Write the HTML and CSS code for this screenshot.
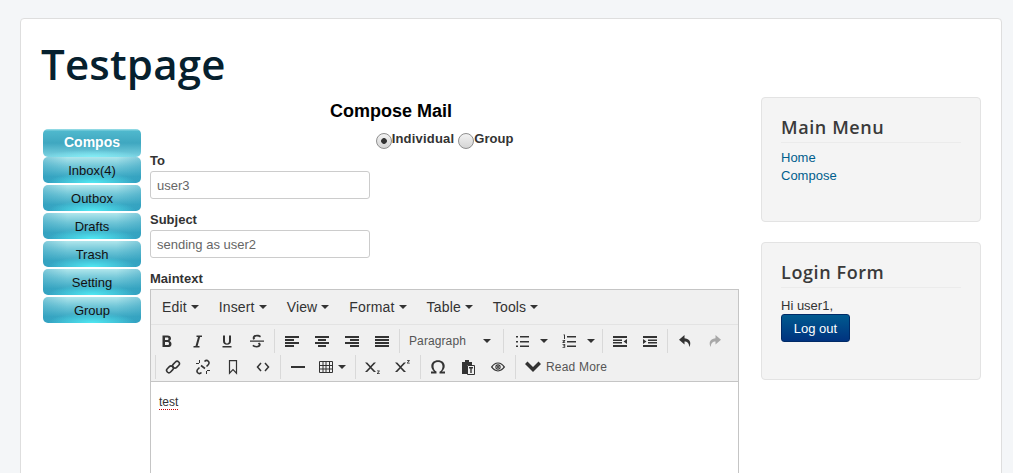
FILE: index.html
```html
<!DOCTYPE html>
<html lang="en">
<head>
    <meta charset="UTF-8">
    <title>Testpage</title>
    <link rel="stylesheet" href="styles.css">
</head>
<body>
    <div class="page">
        <h1 class="site-title">Testpage</h1>
        <div class="columns">
            <div class="main">
                <h3 class="compose-title">Compose Mail</h3>
                <div class="main-row">
                    <ul class="side-nav">
                        <li class="active">Compos</li>
                        <li>Inbox(4)</li>
                        <li>Outbox</li>
                        <li>Drafts</li>
                        <li>Trash</li>
                        <li>Setting</li>
                        <li>Group</li>
                    </ul>
                    <form class="mail-form">
                        <div class="radio-row">
                            <input type="radio" name="kind" id="individual" checked><label for="individual">Individual</label>
                            <input type="radio" name="kind" id="group"><label for="group">Group</label>
                        </div>
                        <label class="field-label" for="to">To</label>
                        <input class="text-input" type="text" id="to" value="user3">
                        <label class="field-label" for="subject">Subject</label>
                        <input class="text-input" type="text" id="subject" value="sending as user2">
                        <label class="field-label" for="maintext">Maintext</label>
                        <div class="editor">
                            <div class="menubar">
                                <span class="menu-item">Edit<i class="caret"></i></span>
                                <span class="menu-item">Insert<i class="caret"></i></span>
                                <span class="menu-item">View<i class="caret"></i></span>
                                <span class="menu-item">Format<i class="caret"></i></span>
                                <span class="menu-item">Table<i class="caret"></i></span>
                                <span class="menu-item">Tools<i class="caret"></i></span>
                            </div>
                            <div class="toolbar">
                                <div class="tool-row">
                                    <div class="tool-group first">
                                        <span class="tool"><svg viewBox="0 0 16 16"><path d="M3.500 2.500h5c2.200 0 3.500 1.100 3.500 3 0 1.200-.7 2-1.600 2.500 1.200.4 2.100 1.500 2.100 2.900 0 2.200-1.600 3.100-3.800 3.100H3.500zm2.500 2v2.500h2.200c.9 0 1.300-.5 1.300-1.300 0-.8-.5-1.200-1.400-1.200zm0 4.500v3h2.500c1 0 1.500-.5 1.500-1.500 0-1-.6-1.500-1.600-1.500z"/></svg></span>
                                        <span class="tool"><svg viewBox="0 0 16 16"><path d="M7.500 2.500H13V4h-1.900L8.600 13h1.900v1.500h-6V13h2L9 4H7.500z"/></svg></span>
                                        <span class="tool"><svg viewBox="0 0 16 16"><path d="M3.500 13h9v1.500h-9zM4 2.500h2V8c0 1.500.7 2.500 2 2.500s2-1 2-2.500V2.500h2V8c0 2.500-1.500 3.800-4 3.800S4 10.500 4 8z"/></svg></span>
                                        <span class="tool"><svg viewBox="0 0 16 16"><path d="M1 7.500h14v1.200H1zM4.300 6.800C3.900 6.300 3.700 5.700 3.700 5c0-2 1.800-3.200 4.300-3.200 1.700 0 3 .5 4 1.300l-.9 1.300c-.9-.6-1.900-1-3.100-1-1.400 0-2.300.6-2.300 1.500 0 .4.200.7.500.9zM10.200 9.400c1 .5 1.500 1.200 1.500 2.100 0 1.800-1.600 3-4.100 3-1.800 0-3.200-.5-4.300-1.400l1-1.300c1 .7 2.100 1.100 3.300 1.100 1.300 0 2.100-.5 2.100-1.300 0-.5-.3-.9-.9-1.200z"/></svg></span>
                                    </div>
                                    <div class="tool-group">
                                        <span class="tool"><svg viewBox="0 0 16 16"><path d="M1 3h14v2H1zM1 6h9v2H1zM1 9h14v2H1zM1 12h9v2H1z"/></svg></span>
                                        <span class="tool"><svg viewBox="0 0 16 16"><path d="M1 3h14v2H1zM4 6h8v2H4zM1 9h14v2H1zM4 12h8v2H4z"/></svg></span>
                                        <span class="tool"><svg viewBox="0 0 16 16"><path d="M1 3h14v2H1zM6 6h9v2H6zM1 9h14v2H1zM6 12h9v2H6z"/></svg></span>
                                        <span class="tool"><svg viewBox="0 0 16 16"><path d="M1 3h14v2H1zM1 6h14v2H1zM1 9h14v2H1zM1 12h14v2H1z"/></svg></span>
                                    </div>
                                    <div class="tool-group">
                                        <span class="format-select">Paragraph<i class="caret"></i></span>
                                    </div>
                                    <div class="tool-group">
                                        <span class="tool split"><svg viewBox="0 0 16 16"><path d="M6 3h9v1.500H6zM6 8h9v1.500H6zM6 12.500h9V14H6zM2 3h2v1.500H2zM2 8h2v1.500H2zM2 12.500h2V14H2z"/></svg><i class="caret"></i></span>
                                        <span class="tool split"><svg viewBox="0 0 16 16"><path d="M6 3h9v1.500H6zM6 8h9v1.500H6zM6 12.500h9V14H6zM2.500 1.500H4V6H3V2.300h-.5zM1.500 7h2.700v1L2.800 9.300h1.400V10H1.500V9L3 7.700H1.500zM1.500 11h2.700v3.700H1.500V14h1.800v-.8H2v-.6h1.300v-.9H1.500z"/></svg><i class="caret"></i></span>
                                    </div>
                                    <div class="tool-group">
                                        <span class="tool"><svg viewBox="0 0 16 16"><path d="M1 3h14v2H1zM1 6.500h9V8H1zM1 9h9v1.500H1zM1 12h14v2H1zM15 6v5l-3.500-2.500z"/></svg></span>
                                        <span class="tool"><svg viewBox="0 0 16 16"><path d="M1 3h14v2H1zM6 6.500h9V8H6zM6 9h9v1.500H6zM1 12h14v2H1zM1 6v5l3.500-2.500z"/></svg></span>
                                    </div>
                                    <div class="tool-group">
                                        <span class="tool"><svg viewBox="0 0 16 16"><path d="M7.500 2L2 6.800l5.500 4.700V8.500c2.800 0 4.500 1.300 4.700 5.500 2-3 1.800-8.200-4.700-8.700z"/></svg></span>
                                        <span class="tool disabled"><svg viewBox="0 0 16 16"><path d="M8.500 2L14 6.800l-5.500 4.700V8.500c-2.800 0-4.500 1.300-4.700 5.500-2-3-1.800-8.200 4.700-8.700z"/></svg></span>
                                    </div>
                                </div>
                                <div class="tool-row second">
                                    <div class="tool-group">
                                        <span class="tool"><svg viewBox="0 0 16 16"><g fill="none" stroke="#333" stroke-width="1.600"><rect x="1.200" y="8" width="7.500" height="4.600" rx="2.300" transform="rotate(-45 5 10.300)"/><rect x="7.300" y="3.400" width="7.500" height="4.600" rx="2.300" transform="rotate(-45 11 5.700)"/></g></svg></span>
                                        <span class="tool"><svg viewBox="0 0 16 16"><g fill="none" stroke="#333" stroke-width="1.600"><path d="M6.500 13.500c-1.300 1.300-2.700 1.400-3.800.3s-1-2.600.3-3.800l1.500-1.500M9.500 2.500c1.300-1.300 2.700-1.400 3.800-.3s1 2.600-.3 3.800l-1.500 1.500M6 6.500l4 3"/></g><path d="M1 4h3v1H1zM4 1h1v3H4zM12 11h3v1h-3zM11 12h1v3h-1z"/></svg></span>
                                        <span class="tool"><svg viewBox="0 0 16 16"><path fill="none" stroke="#333" stroke-width="1.200" d="M4.500 1.700h7v12.500L8 10.700l-3.500 3.500z"/></svg></span>
                                        <span class="tool"><svg viewBox="0 0 16 16"><path fill="none" stroke="#333" stroke-width="1.500" d="M6 4L2.500 8 6 12M10 4l3.500 4L10 12"/></svg></span>
                                    </div>
                                    <div class="tool-group">
                                        <span class="tool"><svg viewBox="0 0 16 16"><path d="M1 7h14v2H1z"/></svg></span>
                                        <span class="tool split narrow"><svg viewBox="0 0 16 16"><path fill="none" stroke="#333" d="M1.500 2.500h13v11h-13zM1.500 6.500h13M1.500 10h13M5 2.500v11M8 2.500v11M11.500 2.500v11"/></svg><i class="caret"></i></span>
                                    </div>
                                    <div class="tool-group">
                                        <span class="tool"><svg viewBox="0 0 16 16"><path d="M0 3.500h2.200L5.500 7l3.300-3.500H11L6.500 8.300 11 13H8.800L5.500 9.600 2.200 13H0l4.500-4.700zM12 11.500h2.700v.8l-1.700 1.900h1.800v.8H12v-.8l1.700-1.900H12z"/></svg></span>
                                        <span class="tool"><svg viewBox="0 0 16 16"><path d="M0 3.500h2.200L5.500 7l3.300-3.500H11L6.500 8.300 11 13H8.800L5.500 9.600 2.200 13H0l4.500-4.700zM12 1h2.700v.8L13 3.700h1.800v.8H12v-.8l1.700-1.900H12z"/></svg></span>
                                    </div>
                                    <div class="tool-group">
                                        <span class="tool"><svg viewBox="0 0 16 16"><path d="M1 14.500v-2h3.200C2.500 11.200 1.300 9.300 1.300 7c0-3.500 2.800-5.800 6.700-5.800s6.700 2.300 6.700 5.800c0 2.300-1.200 4.200-2.900 5.500H15v2H9.500v-1.800c1.900-.9 3-2.900 3-5.500 0-2.500-1.800-4.100-4.500-4.100S3.500 4.500 3.500 7c0 2.600 1.100 4.600 3 5.500v2z"/></svg></span>
                                        <span class="tool"><svg viewBox="0 0 16 16"><path d="M2 3h3V1h4v2h3v3H7v9H2z"/><path fill="#f0f0f0" stroke="#333" d="M7.500 6.500h7v9h-7z"/><path d="M9 8h4v1.500h-1.300v4.500h-1.400V9.500H9z"/></svg></span>
                                        <span class="tool"><svg viewBox="-1 -1 18 18"><path fill-rule="evenodd" d="M0 8c2-3 4.800-5 8-5s6 2 8 5c-2 3-4.800 5-8 5s-6-2-8-5zm1.800 0c1.500 2 3.700 3.800 6.200 3.800S12.700 10 14.200 8C12.700 6 10.500 4.200 8 4.200S3.300 6 1.800 8zM8 5a3 3 0 1 1 0 6 3 3 0 0 1 0-6zm0 1.200a1.800 1.800 0 1 0 0 3.600 1.800 1.800 0 0 0 0-3.600z"/><circle cx="8" cy="8" r="1.200"/></svg></span>
                                    </div>
                                    <div class="tool-group">
                                        <span class="read-more"><svg viewBox="0 0 16 16"><path d="M0 5l2.500-2.500L8 8l5.500-5.500L16 5 8 13z"/></svg>Read More</span>
                                    </div>
                                </div>
                            </div>
                            <div class="edit-area"><span class="misspelled">test</span></div>
                        </div>
                    </form>
                </div>
            </div>
            <div class="sidebar">
                <div class="well main-menu">
                    <h3 class="well-title">Main Menu</h3>
                    <a class="well-link" href="#">Home</a>
                    <a class="well-link" href="#">Compose</a>
                </div>
                <div class="well login-form">
                    <h3 class="well-title">Login Form</h3>
                    <p class="greeting">Hi user1,</p>
                    <button class="logout" type="button">Log out</button>
                </div>
            </div>
        </div>
    </div>
</body>
</html>
```

FILE: styles.css
```css
html, body {
    height: 100%;
    overflow: hidden;
}

body {
    margin: 0;
    padding: 18px 11px 0 20px;
    box-sizing: border-box;
    background-color: #f4f6f8;
    font-family: "Liberation Sans", Arial, sans-serif;
    font-size: 13px;
    color: #333;
}

.page {
    background-color: #fff;
    border: 1px solid #dedede;
    border-radius: 4px;
    padding: 20px 20px 40px;
}

.site-title {
    margin: 0;
    height: 58px;
    font-family: "Open Sans", sans-serif;
    font-weight: 600;
    font-size: 42px;
    line-height: 50px;
    letter-spacing: 0.2px;
    color: #06202e;
}

.columns {
    display: flex;
    justify-content: space-between;
}

/* left part */
.main {
    width: 696px;
    margin-left: 2px;
}

.compose-title {
    margin: 0;
    height: 32px;
    font-size: 18px;
    line-height: 28px;
    text-align: center;
    color: #000;
}

.main-row {
    display: flex;
    gap: 9px;
}

.side-nav {
    list-style: none;
    margin: 0;
    padding: 0;
    width: 98px;
    flex: none;
}

.side-nav li {
    height: 26px;
    margin-bottom: 2px;
    border-radius: 5px;
    text-align: center;
    line-height: 28px;
    color: #111;
    background:
        radial-gradient(ellipse 45% 40% at 50% 100%, rgba(80, 232, 242, 1), rgba(80, 232, 242, 0)),
        linear-gradient(90deg, rgba(40, 150, 185, 0.35), rgba(40, 150, 185, 0) 25%, rgba(40, 150, 185, 0) 75%, rgba(40, 150, 185, 0.35)),
        linear-gradient(#b0e6ec, #72c7d8 35%, #3ba9c4 75%, #38a8c6);
}

.side-nav li.active {
    height: 28px;
    margin-bottom: 0;
    line-height: 26px;
    font-size: 14px;
    font-weight: bold;
    color: #fff;
    background:
        radial-gradient(ellipse 50% 25% at 50% 100%, rgba(130, 240, 248, 0.9), rgba(130, 240, 248, 0)),
        linear-gradient(#a2e2ea, #4fb8cd 8%, #3fa7c0 50%, #7dd3e2);
}

.mail-form {
    width: 589px;
}

.radio-row {
    display: flex;
    justify-content: center;
    height: 20px;
    font-weight: bold;
    line-height: 18px;
}

.radio-row input {
    appearance: none;
    width: 16px;
    height: 16px;
    margin: 4px 0 0;
    border: 1px solid #8f8f8f;
    border-radius: 50%;
    background: linear-gradient(#f2f2f2, #d5d5d5);
}

.radio-row input:checked {
    background: radial-gradient(circle, #333 0, #333 2.500px, transparent 3.200px), linear-gradient(#f2f2f2, #d5d5d5);
}

.radio-row label {
    padding-top: 1px;
    margin-right: 4px;
    letter-spacing: 0.2px;
}

.radio-row label:last-child {
    margin-right: 0;
    letter-spacing: 0;
}

.field-label {
    display: block;
    height: 18px;
    margin-top: 3px;
    margin-bottom: 1px;
    font-weight: bold;
    line-height: 18px;
}

.text-input {
    display: block;
    box-sizing: border-box;
    width: 220px;
    height: 28px;
    margin: 0 0 12px;
    padding: 0 6px;
    border: 1px solid #ccc;
    border-radius: 3px;
    font-family: inherit;
    font-size: 13px;
    color: #666;
}

/* editor */
.editor {
    border: 1px solid #c5c5c5;
    background-color: #f0f0f0;
    height: 300px;
}

.menubar {
    display: flex;
    height: 34px;
    padding-left: 3px;
    border-bottom: 1px solid #e3e3e3;
    font-size: 14px;
    letter-spacing: 0.15px;
    color: #333;
}

.menu-item {
    display: flex;
    align-items: center;
    padding: 0 8px;
    margin-right: 4px;
}

.caret {
    display: inline-block;
    width: 0;
    height: 0;
    margin-left: 4px;
    border-top: 4px solid #333;
    border-left: 4px solid transparent;
    border-right: 4px solid transparent;
}

.toolbar {
    padding: 4px 0 2px;
    border-bottom: 1px solid #c5c5c5;
}

.tool-row {
    display: flex;
    height: 24px;
    margin-bottom: 2px;
}

.tool-row.second {
    margin-bottom: 0;
    padding-left: 4px;
}

.tool-group {
    display: flex;
    align-items: center;
    padding: 0 2px;
    border-left: 1px solid #d9d9d9;
}

.tool-group.first {
    border-left: none;
    padding-left: 1px;
}

.tool {
    display: flex;
    align-items: center;
    justify-content: center;
    width: 30px;
}

.tool svg {
    width: 16px;
    height: 16px;
    flex: none;
    fill: #333;
}

.tool.split {
    justify-content: flex-start;
    box-sizing: border-box;
    width: 47px;
    padding-left: 8px;
}

.tool.split .caret {
    margin-left: 10px;
}

.tool.narrow {
    width: 40px;
    padding-left: 5px;
}

.tool.narrow .caret {
    margin-left: 4px;
}

.tool.disabled svg {
    fill: #a8a8a8;
}

.format-select {
    display: flex;
    align-items: center;
    justify-content: space-between;
    box-sizing: border-box;
    width: 99px;
    padding: 0 10px 0 7px;
    font-size: 12px;
    letter-spacing: 0.1px;
    color: #555;
}

.format-select .caret {
    margin: 0;
}

.read-more {
    display: flex;
    align-items: center;
    gap: 5px;
    padding-left: 7px;
    font-size: 12px;
    letter-spacing: 0.2px;
    color: #555;
}

.read-more svg {
    width: 16px;
    height: 16px;
    fill: #333;
}

.edit-area {
    height: 200px;
    padding: 13px 8px;
    background-color: #fff;
    font-size: 12px;
    color: #333;
}

.misspelled {
    border-bottom: 1px dotted #c00;
}

/* right part */
.sidebar {
    width: 220px;
    flex: none;
}

.well {
    box-sizing: border-box;
    padding: 18px 19px 19px;
    margin-bottom: 20px;
    background-color: #f4f4f4;
    border: 1px solid #e3e3e3;
    border-radius: 4px;
}

.main-menu {
    height: 125px;
}

.login-form {
    height: 138px;
}

.well-title {
    margin: 0 0 6px;
    padding-bottom: 3px;
    height: 23px;
    border-bottom: 1px solid #ebebeb;
    font-family: "Open Sans", sans-serif;
    font-weight: 600;
    font-size: 18px;
    line-height: 22px;
    letter-spacing: 0.6px;
    color: #3a3a3a;
}

.well-link {
    display: block;
    line-height: 18px;
    color: #005e8d;
    text-decoration: none;
}

.greeting {
    margin: 0;
    padding-top: 3px;
    line-height: 17px;
}

.logout {
    display: block;
    width: 69px;
    height: 28px;
    padding: 0;
    border: 1px solid #002a66;
    border-radius: 3px;
    background: linear-gradient(#005a8f, #00337f);
    font-family: inherit;
    font-size: 13px;
    color: #fff;
}
```
